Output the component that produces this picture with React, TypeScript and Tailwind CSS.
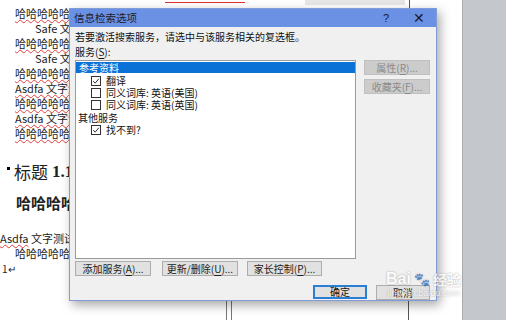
const CJK = "font-['Noto_Sans_CJK_SC','Noto_Sans',sans-serif]";

const DOC_LINES = [
  { text: "哈哈哈哈哈哈哈哈", indent: "pl-[15px]", red: true },
  { text: "Safe 文字测试文字", indent: "pl-[35px]", red: false },
  { text: "哈哈哈哈哈哈哈哈", indent: "pl-[15px]", red: true },
  { text: "Safe 文字测试文字", indent: "pl-[35px]", red: false },
  { text: "哈哈哈哈哈哈哈哈", indent: "pl-[15px]", red: true },
  { text: "Asdfa 文字测试文字", indent: "pl-[15px]", red: true },
  { text: "哈哈哈哈哈哈哈哈", indent: "pl-[15px]", red: true },
  { text: "Asdfa 文字测试文字", indent: "pl-[15px]", red: true },
  { text: "哈哈哈哈哈哈哈哈", indent: "pl-[15px]", red: true },
];

const WAVY = "underline decoration-[#e04040] decoration-wavy decoration-1 underline-offset-1";

function Hot({ k }: { k: string }) {
  return <span className="underline underline-offset-2">{k}</span>;
}

function Check({ on }: { on: boolean }) {
  return (
    <span className="flex h-[10px] w-[10px] items-center justify-center border border-[#333] bg-white">
      {on && (
        <svg viewBox="0 0 10 10" className="h-[8px] w-[8px]">
          <path d="M1.5 5.2 L4 7.6 L8.6 2.2" fill="none" stroke="#222" strokeWidth="1.2" />
        </svg>
      )}
    </span>
  );
}

function Item({ on, label }: { on: boolean; label: string }) {
  return (
    <div className="flex h-[12px] items-center gap-[5px] pl-[15px]">
      <Check on={on} />
      <span>{label}</span>
    </div>
  );
}

function Btn({ children, w, disabled }: { children: React.ReactNode; w: string; disabled?: boolean }) {
  return (
    <div
      className={`flex h-[15px] items-center justify-center border text-[10px] ${w} ${
        disabled ? "border-[#bfbfbf] bg-[#cccccc] text-[#8a8a8a]" : "border-[#adadad] bg-[#e1e1e1] text-[#222]"
      }`}
    >
      {children}
    </div>
  );
}

export default function App() {
  return (
    <div className={`relative h-[320px] w-[506px] overflow-hidden bg-white ${CJK}`}>
      <div className="flex h-full">
        <div className="flex w-[462px] flex-col bg-white text-[11px] leading-[15px] text-[#222]">
          <div className="flex h-[6px] gap-[60px] pl-[165px]">
            <span className="h-[3px] w-[80px] border-b border-[#d33]" />
            <span className="h-[5px] w-[100px] bg-[#e6e6e6]" />
          </div>
          <div className="flex flex-col">
            {DOC_LINES.map((line, i) => (
              <div key={i} className={`whitespace-nowrap ${line.indent}`}>
                <span className={line.red ? WAVY : ""}>{line.text}</span>
              </div>
            ))}
          </div>
          <div className="mt-[20px] flex items-center gap-[4px] pl-[7px] text-[17px] font-bold leading-[22px]">
            <span className="-mt-[8px] h-[3px] w-[3px] bg-black" />
            <span className="font-normal">标题</span>
            <span className="font-['Liberation_Serif',serif]">1.1</span>
          </div>
          <div className="mt-[10px] pl-[16px] text-[15px] font-bold leading-[20px]">哈哈哈哈哈</div>
          <div className="mt-[18px] flex flex-col">
            <div className="whitespace-nowrap">
              <span className={WAVY}>Asdfa</span> 文字测试
            </div>
            <div className="pl-[15px]">哈哈哈哈哈哈</div>
            <div className="pl-[2px] text-[10px]">1↵</div>
          </div>
        </div>
        <div className="flex-1 border-l border-[#a8abb0] bg-[#c4c7cc]" />
      </div>
      <span className="absolute left-[409px] top-0 h-[8px] w-px bg-[#555]" />
      <span className="absolute left-[408px] top-[300px] h-[20px] w-px bg-[#555]" />
      <span className="absolute left-[226px] top-[300px] h-[20px] w-[6px] border-x border-[#777]" />

      <div className="absolute left-[69px] top-[8px] flex h-[293px] w-[368px] flex-col border border-[#7f9bd8] bg-[#f0f0f0] text-[10px] leading-[12px] text-[#111] shadow-[3px_4px_10px_rgba(0,0,0,0.35)]">
        <div className="flex h-[19px] items-center bg-[#6b91e4] pl-[4px] text-[10.5px] text-[#1b1b2e]">
          <span className="flex-1">信息检索选项</span>
          <span className="w-[32px] text-center font-['Liberation_Sans',sans-serif] text-[11px]">?</span>
          <span className="w-[34px] text-center font-['Liberation_Sans',sans-serif] text-[14px] leading-[14px]">✕</span>
        </div>
        <div className="flex flex-1 flex-col px-[5px]">
          <div className="mt-[3px] h-[14px] leading-[14px]">若要激活搜索服务，请选中与该服务相关的复选框。</div>
          <div className="mt-[1px] h-[14px] leading-[14px]">
            服务(<Hot k="S" />):
          </div>
          <div className="mt-[1px] flex h-[199px] gap-[8px]">
            <div className="flex w-[281px] flex-col border border-[#9a9a9a] bg-white pt-[1px]">
              <div className="h-[11px] bg-[#0a72d6] pl-[3px] leading-[11px] text-white">参考资料</div>
              <div className="mt-[2px] flex flex-col">
                <Item on label="翻译" />
                <Item on={false} label="同义词库: 英语(美国)" />
                <Item on={false} label="同义词库: 英语(英国)" />
              </div>
              <div className="h-[13px] pl-[2px] leading-[14px]">其他服务</div>
              <Item on label="找不到?" />
            </div>
            <div className="flex flex-col gap-[4px]">
              <Btn w="w-[66px]" disabled>
                属性(<Hot k="R" />)...
              </Btn>
              <Btn w="w-[66px]" disabled>
                收藏夹(<Hot k="F" />)...
              </Btn>
            </div>
          </div>
          <div className="mt-[2px] flex">
            <Btn w="w-[76px]">
              添加服务(<Hot k="A" />)...
            </Btn>
            <span className="w-[11px]" />
            <Btn w="w-[76px]">
              更新/删除(<Hot k="U" />)...
            </Btn>
            <span className="w-[9px]" />
            <Btn w="w-[75px]">
              家长控制(<Hot k="P" />)...
            </Btn>
          </div>
          <div className="mt-[9px] flex justify-end gap-[9px] pr-[1px]">
            <div className="flex h-[14px] w-[54px] items-center justify-center border-2 border-[#2a7fd4] bg-[#e1e1e1] text-[10px]">
              确定
            </div>
            <Btn w="w-[54px]">取消</Btn>
          </div>
        </div>
      </div>

      <div className="absolute left-[386px] top-[270px] flex flex-col items-center text-white opacity-75 [text-shadow:0_0_2px_rgba(0,0,0,0.45)]">
        <div className="flex items-center gap-[3px] text-[16px] font-bold leading-[18px]">
          <span className="font-['Liberation_Sans',sans-serif]">Bai</span>
          <span className="text-[13px]">🐾</span>
          <span className="text-[14px]">经验</span>
        </div>
        <div className="font-['Liberation_Sans',sans-serif] text-[9px] leading-[10px]">jingyan.baidu.com</div>
      </div>
    </div>
  );
}
